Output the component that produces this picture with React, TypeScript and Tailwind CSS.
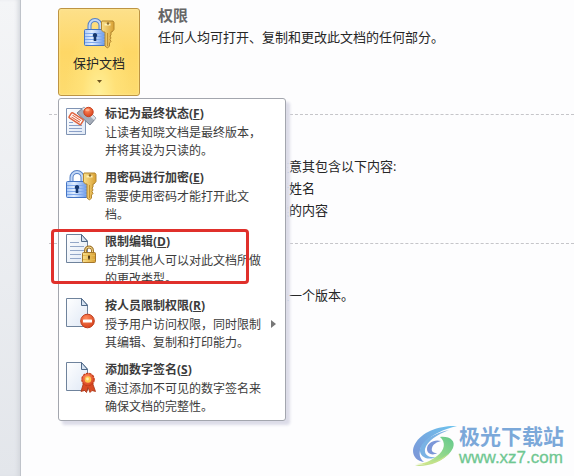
import type { ReactNode } from 'react';

const PageIcon = ({ lines = false }: { lines?: boolean }) => (
  <>
    <path d="M1.5 1.5h15l6 6.5v21.5h-21z" fill="url(#paper)" stroke="#6f839c" />
    <path d="M16.5 1.5V8.5h6z" fill="#d5e2f1" stroke="#4f6988" strokeLinejoin="round" />
    {lines && <path d="M5 9.5h9M5 13.5h14M5 17.5h14M5 21.5h11M5 25.5h11" stroke="#93a7c8" />}
  </>
);

const Defs = () => (
  <svg width="0" height="0" className="absolute" aria-hidden="true">
    <defs>
      <linearGradient id="paper" x1="0" y1="0" x2="1" y2="1">
        <stop offset="0" stopColor="#ffffff" />
        <stop offset="1" stopColor="#dfe8f5" />
      </linearGradient>
      <linearGradient id="lockBody" x1="0" y1="0" x2="1" y2="0">
        <stop offset="0" stopColor="#a9c9f8" />
        <stop offset="0.35" stopColor="#e4f0ff" />
        <stop offset="1" stopColor="#5f92e8" />
      </linearGradient>
      <linearGradient id="gold" x1="0" y1="0" x2="1" y2="0">
        <stop offset="0" stopColor="#f9e08c" />
        <stop offset="1" stopColor="#d9a032" />
      </linearGradient>
      <radialGradient id="red" cx="0.4" cy="0.3" r="0.8">
        <stop offset="0" stopColor="#ff8a5c" />
        <stop offset="1" stopColor="#d23a16" />
      </radialGradient>
      <linearGradient id="swirlTop" x1="0" y1="1" x2="1" y2="0">
        <stop offset="0" stopColor="#7d93d6" />
        <stop offset="1" stopColor="#6cc4ee" />
      </linearGradient>
      <linearGradient id="swirlBottom" x1="0" y1="1" x2="1" y2="0">
        <stop offset="0" stopColor="#e2ec8a" />
        <stop offset="0.5" stopColor="#93d88c" />
        <stop offset="1" stopColor="#62c88d" />
      </linearGradient>
    </defs>
  </svg>
);

const LockKeyIcon = () => (
  <svg viewBox="0 0 32 32" className="size-8 shrink-0" aria-hidden="true">
    <path d="M6.5 13V8.5a5.5 5.5 0 0 1 11 0V13" fill="none" stroke="#5580c6" strokeWidth="4" />
    <path d="M6.5 13V8.5a5.5 5.5 0 0 1 11 0V13" fill="none" stroke="#c3d8f7" strokeWidth="2" />
    <rect x="1.5" y="12.5" width="21" height="16" rx="1" fill="url(#lockBody)" stroke="#4575c4" />
    <path d="M2 16.5h20M2 19.5h20M2 22.5h20M2 25.5h20" stroke="#7fa8ec" />
    <path d="M12 16a2.2 2.2 0 0 1 1.3 4v4h-2.600v-4A2.2 2.2 0 0 1 12 16z" fill="#16386f" />
    <path d="M19 4h11l1 1.5v7l-2 2.5h-1v3l-1 1 1 2-1 1.5 1 2-1.5 1.5v3L24.5 31 22 29V15h-1.5L18.5 13V5z" fill="url(#gold)" stroke="#b3862f" />
    <path d="M21.5 6.5h6v2h-6z" fill="#fff2b8" />
    <circle cx="25" cy="6.5" r="1.2" fill="#8c6a2c" />
    <path d="M24.5 16v13" stroke="#c2902f" />
  </svg>
);

const StampIcon = () => (
  <svg viewBox="0 0 32 32" className="size-8 shrink-0" aria-hidden="true">
    <path d="M1.5 3.5h19v26h-19z" fill="url(#paper)" stroke="#7f93b3" />
    <path d="M4 17.5h4M4 20.5h13M4 23.5h13M4 26.5h13" stroke="#8ba0c8" />
    <path d="M19 2l12 11-6 7L12 8z" fill="#a5adba" stroke="#747d8c" />
    <path d="M19 2l12 11-2 2L17 4z" fill="#dde2e8" />
    <g transform="rotate(33 11 13)">
      <rect x="4.5" y="10.5" width="14" height="6" rx="1" fill="#fff" stroke="#e0623c" strokeWidth="1.5" />
      <path d="M6.5 12.5h10M6.5 14.5h10" stroke="#e0623c" />
    </g>
    <circle cx="23.5" cy="7" r="4.7" fill="url(#red)" stroke="#c8421f" />
    <ellipse cx="22.5" cy="5" rx="2.2" ry="1.3" fill="#ffad86" />
  </svg>
);

const RestrictIcon = () => (
  <svg viewBox="0 0 32 32" className="size-8 shrink-0" aria-hidden="true">
    <PageIcon lines />
    <path d="M20.5 20v-2.500a3.500 3.500 0 0 1 7 0V20" fill="none" stroke="#a3762c" strokeWidth="3" />
    <path d="M20.5 20v-2.500a3.500 3.500 0 0 1 7 0V20" fill="none" stroke="#f5dd94" />
    <rect x="17.5" y="19.5" width="13" height="10" rx="1" fill="url(#gold)" stroke="#a3762c" />
    <path d="M18 22.5h12M18 26.5h12" stroke="#e6bb52" />
    <path d="M24 22.5v4M23 24h2" stroke="#4c3511" strokeWidth="1.5" />
  </svg>
);

const PeopleIcon = () => (
  <svg viewBox="0 0 32 32" className="size-8 shrink-0" aria-hidden="true">
    <PageIcon />
    <circle cx="22.5" cy="24" r="6.8" fill="url(#red)" stroke="#bf3c1c" />
    <rect x="18" y="22.5" width="9" height="3" rx="0.5" fill="#fff" />
  </svg>
);

const SignatureIcon = () => (
  <svg viewBox="0 0 32 32" className="size-8 shrink-0" aria-hidden="true">
    <PageIcon />
    <path d="M18.5 22L16 30.5l3.500-1L21.5 31.5l1.500-5 2 5 2-2 3.500 1L27.5 22z" fill="#d84a24" stroke="#a83213" strokeWidth="0.8" />
    <circle cx="23" cy="18.5" r="6.2" fill="url(#red)" stroke="#c33d1b" strokeWidth="1.2" strokeDasharray="2.5 0.8" />
    <circle cx="23" cy="18.5" r="3.2" fill="#ffc54a" />
    <circle cx="22.5" cy="18" r="1.4" fill="#ffefaf" />
  </svg>
);

type MenuItem = {
  title: string;
  accessKey: string;
  desc: string;
  icon: ReactNode;
  submenu?: boolean;
  marked?: boolean;
};

const menuItems: MenuItem[] = [
  { title: '标记为最终状态', accessKey: 'F', desc: '让读者知晓文档是最终版本，并将其设为只读的。', icon: <StampIcon /> },
  { title: '用密码进行加密', accessKey: 'E', desc: '需要使用密码才能打开此文档。', icon: <LockKeyIcon /> },
  { title: '限制编辑', accessKey: 'D', desc: '控制其他人可以对此文档所做的更改类型。', icon: <RestrictIcon />, marked: true },
  { title: '按人员限制权限', accessKey: 'R', desc: '授予用户访问权限，同时限制其编辑、复制和打印能力。', icon: <PeopleIcon />, submenu: true },
  { title: '添加数字签名', accessKey: 'S', desc: '通过添加不可见的数字签名来确保文档的完整性。', icon: <SignatureIcon /> },
];

function ProtectMenu() {
  return (
    <ul className="absolute top-full left-0 z-10 mt-[2px] flex w-[228px] flex-col gap-2 rounded-[3px] border border-[#a3a6ae] bg-white pt-[5px] pb-1 shadow-[4px_4px_3px_#dcdce8]">
      {menuItems.map(({ title, accessKey, desc, icon, submenu, marked }) => (
        <li key={accessKey} className="relative">
          <button type="button" className="flex w-full items-start pl-[6px] text-left text-xs text-[#3c3c3c]">
            <span className="pt-px">{icon}</span>
            <span className="ml-2 w-[158px] shrink-0">
              <span className="block leading-5 font-bold">
                {title}(<u>{accessKey}</u>)
              </span>
              <span className="block leading-[18px]">{desc}</span>
            </span>
            {submenu && (
              <svg viewBox="0 0 5 8" className="mt-6 ml-2 h-2 w-[5px]" aria-hidden="true">
                <path d="M0 0l5 4-5 4z" fill="#777" />
              </svg>
            )}
          </button>
          {marked && (
            <span className="pointer-events-none absolute -top-[3px] -left-2 h-[55px] w-[198px] rounded-[4px] border-[3px] border-[#e0302b]" />
          )}
        </li>
      ))}
    </ul>
  );
}

function Watermark() {
  return (
    <div className="absolute right-[10px] bottom-2 flex items-center gap-px">
      <svg viewBox="0 0 45 42" className="h-[42px] w-[45px]" aria-hidden="true">
        <path d="M44 1C28 0 9 6 2 19c-5 9 0 17 9 18-6-5-6-13 1-20C20 9 31 4 44 1z" fill="url(#swirlTop)" />
        <path d="M36 5C22 8 9 15 7 24c-1 8 8 12 16 8-7 1-12-2-11-8C14 16 25 9 36 5z" fill="#79b2e4" />
        <path d="M28 16c-7-2-14 2-14 8 0 5 6 7 10 4-4 0-6-2-5-5 1-4 5-6 9-7z" fill="#7b96d8" />
        <path d="M27 12c6 5 5 13-3 19-6 5-14 8-20 8 15 2 31-5 36-16 3-7-3-12-13-11z" fill="url(#swirlBottom)" />
        <path d="M36 28c-6 8-18 13-30 13-2 0-3-1-4-1 12 0 25-4 34-12z" fill="#c3e18a" />
      </svg>
      <div className="flex flex-col whitespace-nowrap">
        <span className="text-[21px] leading-6 font-bold text-[#7ba8d9]">极光下载站</span>
        <a href="#" className="font-['Liberation_Sans',sans-serif] text-[17px] leading-5 text-[#6fc791] [-webkit-text-stroke:0.3px]">
          www.xz7.com
        </a>
      </div>
    </div>
  );
}

export default function App() {
  return (
    <div className="relative flex min-h-screen overflow-hidden bg-[#fdfdfe] font-['Open_Sans','Noto_Sans_CJK_SC',sans-serif] text-[13px] text-[#262626]">
      <Defs />
      <aside className="w-[21px] shrink-0 border-r border-[#bfc3ca] bg-linear-to-b from-[#f4f5f7] to-[#e3e6eb] shadow-[inset_-4px_0_4px_-2px_#d3d6dc]" />
      <main className="min-w-0 flex-1 pt-2 pl-7">
        <section className="flex h-[106px] items-start pl-[9px]">
          <div className="relative shrink-0">
            <button
              type="button"
              className="flex h-[88px] w-[82px] flex-col items-center rounded-[3px] border border-[#bd9443] bg-[radial-gradient(ellipse_at_bottom,#fff09a_0%,#ffe178_30%,transparent_60%),linear-gradient(#fde08a,#fed766_50%,#fddc70)] pt-2 inset-shadow-[0_0_2px_#fff0a8]"
            >
              <LockKeyIcon />
              <span className="mt-1 leading-5">保护文档</span>
              <svg viewBox="0 0 5 3" className="mt-[7px] h-[3px] w-[5px]" aria-hidden="true">
                <path d="M0 0h5L2.5 3z" fill="#6e5420" />
              </svg>
            </button>
            <ProtectMenu />
          </div>
          <div className="ml-[18px] -mt-1">
            <h2 className="text-[15px] leading-[22px] font-bold text-[#666]">权限</h2>
            <p className="leading-[22px]">任何人均可打开、复制和更改此文档的任何部分。</p>
          </div>
        </section>
        <section className="border-t border-dashed border-[#c5c5c9] pt-10 pb-[22px] pl-[227px] leading-[22px]">
          <p>注意其包含以下内容:</p>
          <ul>
            <li>者姓名</li>
            <li>读的内容</li>
          </ul>
        </section>
        <section className="border-t border-dashed border-[#c5c5c9] pt-10 pl-[227px] leading-[22px]">
          <p>上一个版本。</p>
        </section>
      </main>
      <Watermark />
    </div>
  );
}
